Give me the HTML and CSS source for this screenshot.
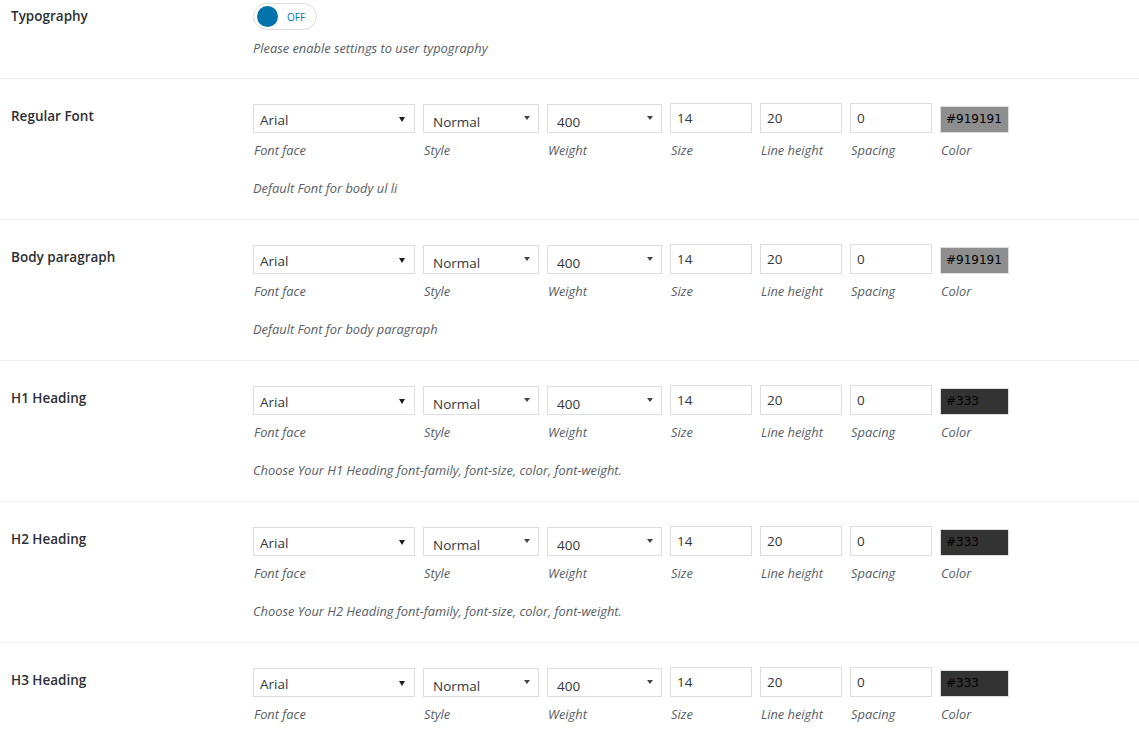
FILE: index.html
```html
<!DOCTYPE html>
<html>
<head>
<meta charset="utf-8">
<link rel="stylesheet" href="styles.css">
</head>
<body>
<div class="settings">
  <div class="row row-first">
    <div class="row-label">Typography</div>
    <div class="row-body">
      <div class="toggle"><span class="knob"></span><span class="toggle-text">OFF</span></div>
      <p class="desc desc-toggle">Please enable settings to user typography</p>
    </div>
  </div>

  <div class="row">
    <div class="row-label">Regular Font</div>
    <div class="row-body">
      <div class="fields">
        <div class="field w-face"><div class="box"><div class="sel sel-face">Arial<span class="arrow"></span></div></div><span class="cap">Font face</span></div>
        <div class="field w-style"><div class="box"><div class="sel sel-small">Normal<span class="arrow arrow-small"></span></div></div><span class="cap">Style</span></div>
        <div class="field w-weight"><div class="box"><div class="sel sel-small">400<span class="arrow arrow-small"></span></div></div><span class="cap">Weight</span></div>
        <div class="field w-num"><div class="box"><div class="inp">14</div></div><span class="cap">Size</span></div>
        <div class="field w-num"><div class="box"><div class="inp">20</div></div><span class="cap">Line height</span></div>
        <div class="field w-num"><div class="box"><div class="inp">0</div></div><span class="cap">Spacing</span></div>
        <div class="field w-col"><div class="box"><div class="color color-grey">#919191</div></div><span class="cap">Color</span></div>
      </div>
      <p class="desc">Default Font for body ul li</p>
    </div>
  </div>

  <div class="row">
    <div class="row-label">Body paragraph</div>
    <div class="row-body">
      <div class="fields">
        <div class="field w-face"><div class="box"><div class="sel sel-face">Arial<span class="arrow"></span></div></div><span class="cap">Font face</span></div>
        <div class="field w-style"><div class="box"><div class="sel sel-small">Normal<span class="arrow arrow-small"></span></div></div><span class="cap">Style</span></div>
        <div class="field w-weight"><div class="box"><div class="sel sel-small">400<span class="arrow arrow-small"></span></div></div><span class="cap">Weight</span></div>
        <div class="field w-num"><div class="box"><div class="inp">14</div></div><span class="cap">Size</span></div>
        <div class="field w-num"><div class="box"><div class="inp">20</div></div><span class="cap">Line height</span></div>
        <div class="field w-num"><div class="box"><div class="inp">0</div></div><span class="cap">Spacing</span></div>
        <div class="field w-col"><div class="box"><div class="color color-grey">#919191</div></div><span class="cap">Color</span></div>
      </div>
      <p class="desc">Default Font for body paragraph</p>
    </div>
  </div>

  <div class="row">
    <div class="row-label">H1 Heading</div>
    <div class="row-body">
      <div class="fields">
        <div class="field w-face"><div class="box"><div class="sel sel-face">Arial<span class="arrow"></span></div></div><span class="cap">Font face</span></div>
        <div class="field w-style"><div class="box"><div class="sel sel-small">Normal<span class="arrow arrow-small"></span></div></div><span class="cap">Style</span></div>
        <div class="field w-weight"><div class="box"><div class="sel sel-small">400<span class="arrow arrow-small"></span></div></div><span class="cap">Weight</span></div>
        <div class="field w-num"><div class="box"><div class="inp">14</div></div><span class="cap">Size</span></div>
        <div class="field w-num"><div class="box"><div class="inp">20</div></div><span class="cap">Line height</span></div>
        <div class="field w-num"><div class="box"><div class="inp">0</div></div><span class="cap">Spacing</span></div>
        <div class="field w-col"><div class="box"><div class="color color-dark">#333</div></div><span class="cap">Color</span></div>
      </div>
      <p class="desc">Choose Your H1 Heading font-family, font-size, color, font-weight.</p>
    </div>
  </div>

  <div class="row">
    <div class="row-label">H2 Heading</div>
    <div class="row-body">
      <div class="fields">
        <div class="field w-face"><div class="box"><div class="sel sel-face">Arial<span class="arrow"></span></div></div><span class="cap">Font face</span></div>
        <div class="field w-style"><div class="box"><div class="sel sel-small">Normal<span class="arrow arrow-small"></span></div></div><span class="cap">Style</span></div>
        <div class="field w-weight"><div class="box"><div class="sel sel-small">400<span class="arrow arrow-small"></span></div></div><span class="cap">Weight</span></div>
        <div class="field w-num"><div class="box"><div class="inp">14</div></div><span class="cap">Size</span></div>
        <div class="field w-num"><div class="box"><div class="inp">20</div></div><span class="cap">Line height</span></div>
        <div class="field w-num"><div class="box"><div class="inp">0</div></div><span class="cap">Spacing</span></div>
        <div class="field w-col"><div class="box"><div class="color color-dark">#333</div></div><span class="cap">Color</span></div>
      </div>
      <p class="desc">Choose Your H2 Heading font-family, font-size, color, font-weight.</p>
    </div>
  </div>

  <div class="row">
    <div class="row-label">H3 Heading</div>
    <div class="row-body">
      <div class="fields">
        <div class="field w-face"><div class="box"><div class="sel sel-face">Arial<span class="arrow"></span></div></div><span class="cap">Font face</span></div>
        <div class="field w-style"><div class="box"><div class="sel sel-small">Normal<span class="arrow arrow-small"></span></div></div><span class="cap">Style</span></div>
        <div class="field w-weight"><div class="box"><div class="sel sel-small">400<span class="arrow arrow-small"></span></div></div><span class="cap">Weight</span></div>
        <div class="field w-num"><div class="box"><div class="inp">14</div></div><span class="cap">Size</span></div>
        <div class="field w-num"><div class="box"><div class="inp">20</div></div><span class="cap">Line height</span></div>
        <div class="field w-num"><div class="box"><div class="inp">0</div></div><span class="cap">Spacing</span></div>
        <div class="field w-col"><div class="box"><div class="color color-dark">#333</div></div><span class="cap">Color</span></div>
      </div>
    </div>
  </div>
</div>
</body>
</html>
```

FILE: styles.css
```css
html, body {
  margin: 0;
  padding: 0;
  background: #ffffff;
}
body {
  font-family: "Open Sans", "Noto Sans", sans-serif;
  color: #32373c;
  font-size: 13px;
}
.settings {
  width: 1139px;
}
.row {
  display: flex;
  border-top: 1px solid #eeeeee;
  padding: 24px 0 22px 0;
}
.row-first {
  border-top: none;
  padding: 3px 0 21px 0;
}
.row-label {
  width: 242px;
  padding-left: 11px;
  margin-top: 3px;
  font-size: 13.5px;
  line-height: 20px;
  font-weight: 600;
  color: #2c3035;
  flex-shrink: 0;
}
.row-body {
  display: flex;
  flex-direction: column;
  align-items: flex-start;
}
.toggle {
  width: 64px;
  height: 27px;
  box-sizing: border-box;
  border: 1px solid #dddddd;
  border-radius: 14px;
  display: flex;
  align-items: center;
  padding-left: 3px;
  gap: 9px;
  background: #fff;
}
.knob {
  width: 21px;
  height: 21px;
  border-radius: 50%;
  background: #0073aa;
}
.toggle-text {
  font-size: 10px;
  color: #0073aa;
}
.desc {
  margin: 20px 0 0 0;
  font-style: italic;
  font-size: 12.85px;
  line-height: 18px;
  color: #555d66;
}
.desc-toggle {
  margin-top: 9px;
}
.fields {
  display: flex;
  gap: 8px;
}
.field {
  display: flex;
  flex-direction: column;
}
.w-face { width: 162px; }
.w-style { width: 116px; }
.w-weight { width: 115px; }
.w-num { width: 82px; }
.w-col { width: 69px; }
.box {
  height: 30px;
  display: flex;
  align-items: flex-end;
}
.sel {
  position: relative;
  width: 100%;
  height: 29px;
  box-sizing: border-box;
  border: 1px solid #dddddd;
  background: #fff;
  font-size: 13.5px;
  line-height: 18px;
  color: #32373c;
}
.sel-face {
  padding: 6px 0 0 6px;
}
.sel-small {
  padding: 8px 0 0 9px;
}
.arrow {
  position: absolute;
  right: 9px;
  top: 12px;
  width: 0;
  height: 0;
  border-left: 3px solid transparent;
  border-right: 3px solid transparent;
  border-top: 5px solid #1e1e1e;
}
.arrow-small {
  right: 8px;
  top: 11px;
  border-top-color: #444;
  border-top-width: 4px;
}
.inp {
  width: 100%;
  height: 30px;
  box-sizing: border-box;
  border: 1px solid #dddddd;
  background: #fff;
  font-size: 13.5px;
  line-height: 18px;
  padding: 5px 0 0 6px;
  color: #32373c;
}
.color {
  width: 100%;
  height: 27px;
  box-sizing: border-box;
  border: 1px solid #dddddd;
  font-family: "DejaVu Sans", sans-serif;
  font-size: 12px;
  padding: 5px 0 0 5px;
}
.color-grey {
  background: #8e8e8e;
  color: #000;
}
.color-dark {
  background: #333333;
  color: #000;
}
.cap {
  margin-top: 8px;
  font-style: italic;
  font-size: 12.85px;
  line-height: 18px;
  color: #555d66;
  padding-left: 1px;
}
```
